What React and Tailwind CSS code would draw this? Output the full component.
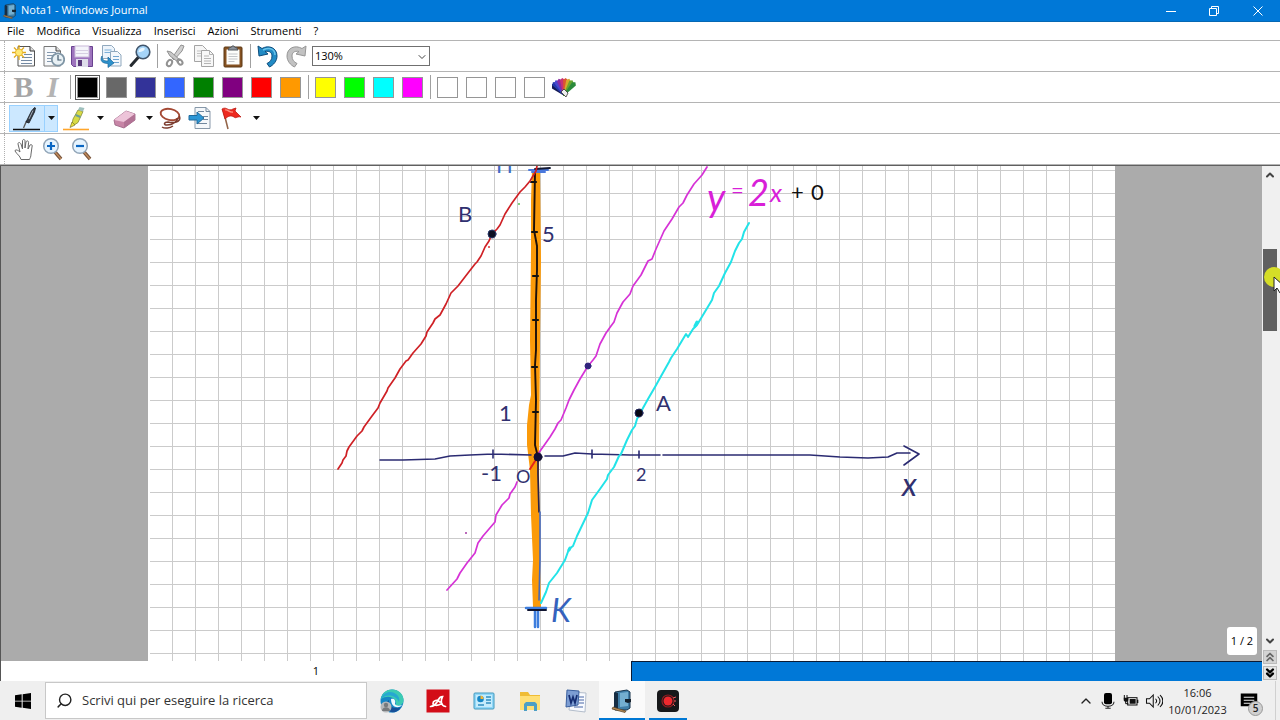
import { useState } from 'react';
import { ChevronDown, ChevronUp, ChevronsDown, ChevronsUp, Search } from 'lucide-react';

const MENUS = ['File', 'Modifica', 'Visualizza', 'Inserisci', 'Azioni', 'Strumenti', '?'];

const PEN_COLORS = [
  { name: 'Nero', className: 'bg-black' },
  { name: 'Grigio', className: 'bg-[#686868]' },
  { name: 'Blu scuro', className: 'bg-[#333399]' },
  { name: 'Blu', className: 'bg-[#3366ff]' },
  { name: 'Verde', className: 'bg-[#008000]' },
  { name: 'Viola', className: 'bg-[#800080]' },
  { name: 'Rosso', className: 'bg-[#ff0000]' },
  { name: 'Arancione', className: 'bg-[#ff9900]' },
];

const MARKER_COLORS = [
  { name: 'Giallo', className: 'bg-[#ffff00]' },
  { name: 'Verde chiaro', className: 'bg-[#00ff00]' },
  { name: 'Turchese', className: 'bg-[#00ffff]' },
  { name: 'Magenta', className: 'bg-[#ff00ff]' },
];

const CUSTOM_COLORS = ['Colore 1', 'Colore 2', 'Colore 3', 'Colore 4'];

/* ---------- Toolbar icons ---------- */

const Icon = ({ children, className = 'w-6 h-6' }) => (
  <svg viewBox="0 0 24 24" className={className} fill="none" aria-hidden="true">
    {children}
  </svg>
);

const NewNoteIcon = () => (
  <Icon>
    <path d="M6 2.500h12l4.500 4.500v15h-16.500z" fill="#fbfcfd" stroke="#555" />
    <path d="M18 2.500v4.500h4.500" fill="#ddd" stroke="#333" />
    <path d="M12 10.500h8M10 13.500h10M9 16.500h11M9 19.500h11" stroke="#7389a3" />
    <path d="M7 1v15M0 8.500h14M2 3.500l10 10M12 3.500l-10 10" stroke="#e2aa1b" strokeWidth="1.300" />
    <circle cx="7" cy="8.500" r="3.600" fill="#ffe873" stroke="#e9b82c" />
  </Icon>
);

const TemplateIcon = () => (
  <Icon>
    <path d="M3 2.500h12l4.500 4.500v15h-16.500z" fill="#f7f9fb" stroke="#777" />
    <path d="M15 2.500v4.500h4.500" fill="#ddd" stroke="#444" />
    <path d="M6 8.500h9M6 11.500h6M6 14.500h5M6 17.500h6" stroke="#8498ad" />
    <circle cx="17" cy="15.500" r="6.200" fill="#e9f1f5" stroke="#7f95a5" strokeWidth="1.800" />
    <path d="M17 11v5h3.500" stroke="#41596d" strokeWidth="1.200" />
  </Icon>
);

const SaveIcon = () => (
  <Icon>
    <path d="M1.500 2.500h21v20h-19l-2-2z" fill="#9d73bd" stroke="#694290" />
    <rect x="5" y="2" width="14" height="11" fill="#f4f4fa" stroke="#c8b7d8" />
    <path d="M6 6.500h12M6 9.500h12" stroke="#d6cfe2" />
    <rect x="6" y="15" width="12" height="8" fill="#deddea" />
    <rect x="8" y="16" width="4" height="6" fill="#583879" />
  </Icon>
);

const ImportIcon = () => (
  <Icon>
    <path d="M3.500 1.500h9l3 3v10h-12z" fill="#edf4fb" stroke="#91a9be" />
    <path d="M5.500 6h7M5.500 8.500h7" stroke="#7db0d9" />
    <path d="M11.500 7.500h7l3.500 3.500v11h-10.500z" fill="#f4f8fc" stroke="#91a9be" />
    <path d="M14 12.500h6M14 15.500h6M14 18.500h6" stroke="#71a5d0" />
    <path d="M3 12c0 4 2 5 6 5v-4l6 6-6 4.500v-4c-6 0-8.500-3-6-7.500z" fill="#2d91cb" stroke="#1a689d" strokeWidth=".7" />
  </Icon>
);

const FindIcon = () => (
  <Icon>
    <path d="M3 21.500l8-9" stroke="#252a30" strokeWidth="3" strokeLinecap="round" />
    <circle cx="15" cy="8" r="6.800" fill="#a5d4f8" stroke="#42566c" strokeWidth="1.600" />
    <path d="M10.500 8a4.500 4.500 0 0 1 6-4c1 2-2 4-6 4z" fill="#eaf7ff" />
  </Icon>
);

const CutIcon = () => (
  <Icon>
    <path d="M18 1l3 1-2 5-8 9-2-2z" fill="#d0d0d0" stroke="#929292" />
    <path d="M4 7l4 1 9 8-2 2-8-6z" fill="#c8c8c8" stroke="#929292" />
    <ellipse cx="6.500" cy="19" rx="2.300" ry="3.300" stroke="#929292" strokeWidth="2" transform="rotate(30 6.500 19)" />
    <ellipse cx="17" cy="18" rx="2" ry="3" stroke="#929292" strokeWidth="2" transform="rotate(-40 17 18)" />
  </Icon>
);

const CopyIcon = () => (
  <Icon>
    <path d="M2.500 1.500h8l4 4v12h-12z" fill="#f6f6f6" stroke="#a4a4a4" />
    <path d="M5 7h7M5 9.500h7M5 12h7" stroke="#c1c1c1" />
    <path d="M9.500 6.500h8l4 4v12h-12z" fill="#f8f8f8" stroke="#a4a4a4" />
    <path d="M17.500 6.500v4h4M12 12h5M12 14.500h7M12 17h7M12 19.500h7" stroke="#b4b4b4" />
  </Icon>
);

const PasteIcon = () => (
  <Icon>
    <rect x="3" y="3" width="18" height="20" rx="1" fill="#865222" stroke="#5d3815" />
    <path d="M5.500 5.500h13v15h-13z" fill="#fdfdfb" />
    <path d="M7.500 10h9M7.500 12.500h9M7.500 15h9M7.500 17.500h6" stroke="#c3c5c9" />
    <path d="M8 5V3.500h2L11 2h2l1 1.500h2V5l1 1H7z" fill="#8b929b" stroke="#555a60" />
  </Icon>
);

const UndoIcon = () => (
  <Icon>
    <path
      d="M2 2l1 10 9-2-3-2.500c5-1 7 1.500 7 4.500 0 4-2 6-5 7.500l2.500 3.500c4-2 7.500-6 7.500-11C21 4 13 .5 6 4.500z"
      fill="#218bc5"
      stroke="#0c4c7c"
    />
    <path d="M7 6c7-3 12-1 12 5" stroke="#68c3ea" strokeWidth="1.500" />
  </Icon>
);

const RedoIcon = () => (
  <Icon>
    <path
      d="M21 2l-1 10-9-2 3-2.500c-5-1-7 1.500-7 4.500 0 4 2 6 5 7.500L9.500 23C5.500 21 2 17 2 12 2 4 10 .5 17 4.500z"
      fill="#c2c2c2"
      stroke="#969696"
    />
  </Icon>
);

const FAN = [
  { angle: -52, color: '#151b55' },
  { angle: -41, color: '#233bad' },
  { angle: -30, color: '#4a48ce' },
  { angle: -18, color: '#8b2ca3' },
  { angle: -6, color: '#c73275' },
  { angle: 6, color: '#dc5631' },
  { angle: 18, color: '#d5a92e' },
  { angle: 30, color: '#6aa62f' },
  { angle: 42, color: '#2b8b3c' },
];

const PaletteIcon = () => (
  <Icon>
    {FAN.map(({ angle, color }) => (
      <path key={color} d="M11.500 21L9.500 5l2.500-2 2.500 2-2 16z" fill={color} transform={`rotate(${angle} 12 20)`} />
    ))}
    <path d="M9 17l3-3 4 4-2 4z" fill="#eee" stroke="#333" strokeWidth=".8" />
  </Icon>
);

const PenIcon = () => (
  <svg viewBox="0 0 30 26" className="w-[30px] h-[26px]" fill="none" aria-hidden="true">
    <path d="M1 24.500h27" stroke="#111" strokeWidth="1.500" />
    <path d="M11.500 23l3-7" stroke="#555" strokeWidth="1.300" />
    <path d="M14 17l5.500-11 3-3.500 1 .5-1 4L17 18z" fill="#343b45" stroke="#15191e" strokeWidth=".8" />
    <path d="M17 14l4-8.500" stroke="#a3adb8" />
  </svg>
);

const HighlighterIcon = () => (
  <svg viewBox="0 0 30 26" className="w-[30px] h-[26px]" fill="none" aria-hidden="true">
    <path d="M2 24.500h26" stroke="#ffa62c" strokeWidth="1.600" />
    <path d="M11 19l1-5 5-9 5 1.500-5 11-3 2z" fill="#d8db45" stroke="#878a37" strokeWidth=".8" />
    <path d="M17 5l1.500-3 5 1-1.500 3.500z" fill="#9fc0bd" />
    <path d="M14.500 10l5 2" stroke="#6d9f96" strokeWidth="2" />
    <path d="M11 17l-2 5.500 5-2.500z" fill="#e8e138" stroke="#777632" strokeWidth=".7" />
  </svg>
);

const EraserIcon = () => (
  <Icon>
    <path d="M1 14L13 5l9 3v6L11 22 2 19z" fill="#c785a6" stroke="#986080" strokeWidth=".8" />
    <path d="M1 14L13 5l9 3-11 8z" fill="#edc4d9" />
    <path d="M11 16v6l11-8V8z" fill="#b27395" />
  </Icon>
);

const LassoIcon = () => (
  <Icon>
    <ellipse cx="11" cy="8.500" rx="9.500" ry="5.500" stroke="#a44934" strokeWidth="1.900" transform="rotate(12 11 8.500)" />
    <path d="M20 10c3 4-2 8-11 6-4 0-5 3-1 3 6 0 11-4 10-7M3 21c3 2 8 1 11-1" stroke="#7d3d30" strokeWidth="1.500" />
  </Icon>
);

const InsertIcon = () => (
  <Icon>
    <path d="M7 1.500h11l4 4v17h-15z" fill="#f5f8fb" stroke="#8798a9" />
    <path d="M18 1.500v4h4M10 5.500h6M15 10.500h5M15 13.500h5M9 17.500h10" stroke="#72889e" />
    <path d="M1 9.500h8V6l7 6-7 6v-4H1z" fill="#2c96d5" stroke="#216b9c" />
  </Icon>
);

const FlagIcon = () => (
  <Icon>
    <path d="M3 3l5 20" stroke="#936448" strokeWidth="1.500" />
    <path d="M2 3c5-3 6 3 11 0l3-1-1 3 6 6c-4-1-5 2-7 0-3-2-6-1-9 2z" fill="#ed2a20" stroke="#bd1912" strokeWidth=".8" />
    <path d="M5 4c3-1 4 3 8 2" stroke="#ff8e7e" strokeWidth="1.300" />
  </Icon>
);

const HandIcon = () => (
  <Icon>
    <path
      d="M9 22.500c-1-4-4-5-6-8.500 0-2 3-1 5 1L6 7c0-2 2-2 3 0l1.500 5V4c0-2 2.500-2 2.500 0v7l1-6c1-2 3-1 2.500 1L16 12l2-4c1-1 3 0 2 2l-1 7c0 3-1 4-1.500 5.500z"
      fill="#fff"
      stroke="#696969"
    />
  </Icon>
);

const ZoomIcon = ({ plus }) => (
  <Icon>
    <path d="M14 15l6 7" stroke="#74513a" strokeWidth="3.500" />
    <path d="M14 15l6 7" stroke="#c08a5b" strokeWidth="1.500" />
    <circle cx="10" cy="9" r="7.300" fill="#e6f4ff" stroke="#91a5b8" strokeWidth="1.500" />
    <path d={plus ? 'M6 9h8M10 5v8' : 'M6 9h8'} stroke="#0966c3" strokeWidth="2.200" />
  </Icon>
);

/* ---------- Taskbar icons ---------- */

const JournalIcon = ({ className = 'w-6 h-6' }) => (
  <Icon className={className}>
    <path d="M5 3l12-2 3 2v16l-3 2H5z" fill="#407fa8" stroke="#18354c" />
    <path d="M5 3l3 1v17H4V4z" fill="#162d43" />
    <path d="M10 4l8-1v14l-8 1z" fill="#74afd0" />
    <path d="M15 10h6v3l-3 1-3-1z" fill="#14212d" />
    <path d="M3 18l13 4-1 1.500L2 20z" fill="#b98b52" stroke="#554028" strokeWidth=".7" />
  </Icon>
);

const WindowsIcon = () => (
  <Icon className="w-4 h-4">
    <path d="M0 3.500L10 2v9.500H0zM11.500 1.800L24 0v11.500H11.500zM0 12.800h10V22L0 20.700zM11.500 12.800H24V24l-12.500-1.800z" fill="#000" />
  </Icon>
);

const EdgeIcon = () => (
  <Icon>
    <circle cx="12" cy="12" r="11.500" fill="#1686c5" />
    <path d="M1 10C2 3 8 0 13 .5c7 .5 11 6 10.500 11.500-.5 4-4 5.500-8 4.500 3-7-7-12-14.500-6.500z" fill="#3bcbb3" />
    <path d="M1 10C3 3 11 1 16 5c3 2 4 5 3 8-3-7-12-9-18-3z" fill="#26a8d1" />
    <path d="M9 11c-1 6 5 10 12 7-2 4-6 6-10 5-6-2-6-9-2-12z" fill="#174f98" />
    <path d="M11 10c3-1 5 1 4 5 1 2 4 2 7 1-3 4-11 3-11-6z" fill="#effaff" />
    <circle cx="6" cy="18" r="5.500" fill="#b5b7b9" />
    <circle cx="6" cy="16" r="2.200" fill="#76797c" />
    <path d="M2 22c0-5 8-5 8 0z" fill="#76797c" />
  </Icon>
);

const AviraIcon = () => (
  <Icon>
    <path d="M.5.5h23v23H.5z" fill="#d30d18" />
    <path
      d="M4.500 17.500c4 0 6-3 8-7 1-2 2-3 4-3-2 4-2 9 3 10M14 13c-4-3-7-1-7 1.500 0 2 4 2.500 8 .5"
      stroke="#fff"
      strokeWidth="1.700"
      strokeLinecap="round"
    />
  </Icon>
);

const ControlPanelIcon = () => (
  <Icon>
    <rect x="2" y="4" width="20" height="16" rx="1" fill="#90d7f8" stroke="#4399bd" />
    <path d="M4 6h16v12H4z" fill="#c5ecfc" />
    <circle cx="8.500" cy="10" r="3.300" fill="#1586c6" />
    <path d="M8.500 10V6.500a3.500 3.500 0 0 1 3 3.500z" fill="#f5b536" />
    <path d="M14 8h5M14 11h5M14 14h5M6 16h6" stroke="#328dbe" strokeWidth="1.300" />
  </Icon>
);

const FolderIcon = () => (
  <Icon>
    <path d="M2 3h8l2 3h10v15H2z" fill="#efbc35" />
    <path d="M2 7h20v14H2z" fill="#ffdf75" />
    <path d="M6 22v-7l2-2h9l2 2v7h-3v-5H9v5z" fill="#4d9fc5" />
  </Icon>
);

const WordIcon = () => (
  <Icon>
    <path d="M7 3l15 1-1 19-16-2z" fill="#f9fbff" stroke="#b3bdcb" />
    <path d="M15 8h5M15 11h5M15 14h5M10 18h9" stroke="#4867a5" strokeWidth="1.200" />
    <path d="M3 1l12 1-1 14-12 2z" fill="#7c9dd3" stroke="#395f9e" />
    <path d="M5 6l2 8 2-6 2 6 2-8" stroke="#152d72" strokeWidth="1.700" />
  </Icon>
);

const RecorderIcon = () => (
  <Icon>
    <rect x="1" y="1" width="22" height="22" rx="4" fill="#17181a" />
    <circle cx="12" cy="12" r="6" stroke="#8e1c20" strokeWidth="1.200" />
    <circle cx="12" cy="12" r="4.500" fill="#ef292e" />
    <path d="M17 9l3-1M18 12h2M17 15l2 2" stroke="#ed5b5e" />
  </Icon>
);

const MicIcon = () => (
  <Icon className="w-4 h-4">
    <rect x="6" y="0" width="12" height="17" rx="3" fill="#000" />
    <path d="M3 13c0 9 18 9 18 0M12 20v3M8 23h8" stroke="#222" strokeWidth="1.600" />
  </Icon>
);

const BatteryIcon = () => (
  <Icon className="w-4 h-4">
    <rect x="7" y="7" width="14" height="11" stroke="#111" strokeWidth="1.500" />
    <path d="M10 9h9v7h-9zM21 10h2v5h-2zM1 7h7v3c0 4-7 4-7 0z" fill="#111" />
    <path d="M2 3v5M6 3v5M4 12v4h4" stroke="#111" strokeWidth="1.500" />
  </Icon>
);

const VolumeIcon = () => (
  <Icon className="w-[18px] h-[18px]">
    <path d="M2 9h4l5-5v16l-5-5H2zM14 9c2 2 2 4 0 6M17 6c4 4 4 8 0 12M20 4c5 5 5 11 0 16" stroke="#111" strokeWidth="1.400" />
  </Icon>
);

const NotificationIcon = () => (
  <Icon className="w-[18px] h-[18px]">
    <path d="M1 2h22v17h-5v4l-5-4H1z" fill="#000" />
    <path d="M5 7h14M5 11h14M5 15h9" stroke="#efefef" strokeWidth="1.500" />
  </Icon>
);

/* ---------- Toolbar parts ---------- */

const ToolButton = ({ label, children, onClick, pressed }) => (
  <button
    type="button"
    aria-label={label}
    aria-pressed={pressed}
    onClick={onClick}
    className="w-[29px] h-7 shrink-0 flex items-center justify-center hover:bg-sky-50"
  >
    {children}
  </button>
);

const SplitButton = ({ label, children, active }) => (
  <div className={`flex shrink-0 w-[49px] h-[27px] ${active ? 'bg-[#cce8ff] outline outline-[#99d1ff] -outline-offset-1' : ''}`}>
    <button type="button" aria-label={label} className="w-[35px] flex items-center justify-center">
      {children}
    </button>
    <button
      type="button"
      aria-label={`Opzioni ${label}`}
      className={`w-[14px] flex items-center justify-center ${active ? 'border-l border-[#99d1ff]' : ''}`}
    >
      <svg viewBox="0 0 7 4" className="w-[7px] h-1" aria-hidden="true">
        <path d="M0 0h7L3.500 4z" fill="#111" />
      </svg>
    </button>
  </div>
);

const Separator = () => (
  <div className="w-[6px] shrink-0 flex justify-center">
    <div className="w-px h-6 bg-[#a0a0a0]" />
  </div>
);

const ToolbarRow = ({ label, children }) => (
  <div role="toolbar" aria-label={label} className="h-[31px] pl-1 flex items-center bg-white border-b border-[#b4b4b4]">
    <div className="w-[5px] h-full shrink-0 border-l border-dotted border-[#b0b0b0]" />
    {children}
  </div>
);

const Swatch = ({ name, className, selected, onSelect }) => (
  <ToolButton label={name} pressed={selected} onClick={() => onSelect(name)}>
    <span
      className={`w-[21px] h-[21px] border border-[#969696] ${className} ${
        selected ? 'outline outline-[#555] outline-offset-1' : ''
      }`}
    />
  </ToolButton>
);

/* ---------- Page with the ink ---------- */

const Tick = ({ x, y }) => <path d={`M${x} ${y}h5`} stroke="#111" strokeWidth="2.200" />;

const InkPage = () => (
  <svg className="w-[967px] h-full shrink-0 bg-white font-['Lato',sans-serif]" fill="none" role="img" aria-label="Grafico">
    <defs>
      <pattern id="squares" x="24" y="4" width="23" height="23" patternUnits="userSpaceOnUse">
        <path d="M.5 0v23M0 .5h23" stroke="#cbcbcb" />
      </pattern>
    </defs>
    <rect x="2" width="965" height="100%" fill="url(#squares)" />

    <g transform="translate(-148 -166)" strokeLinecap="round" strokeLinejoin="round">
      {/* y axis */}
      <path
        d="M532 170L531 200 531 250 530 340 531 395 529 405 527 425 527 445 530 470 531 515 533 560 532 580 533 607H541L540 560 540 530 539 470 540 340 541 260 540 170z"
        fill="#fb9a09"
      />
      <path d="M535 172L534 230 537 246 537 270 536 300 536 350 535 365 536 400 535 445 538 457" stroke="#1c100b" strokeWidth="1.900" />
      <path d="M538 457L538 475 539 512" stroke="#29224b" strokeWidth="1.700" />
      <path d="M540 512L540 560 539 600" stroke="#4668ba" strokeWidth="1.600" />
      <Tick x={531} y={182} />
      <Tick x={532} y={232} />
      <Tick x={533} y={276} />
      <Tick x={533} y={320} />
      <Tick x={532} y={367} />
      <Tick x={533} y={412} />
      <path d="M529 170H548M532 172H545" stroke="#4a78dc" strokeWidth="2" />
      <path d="M535 169L550 168" stroke="#151a33" strokeWidth="1.800" />

      {/* x axis */}
      <path
        d="M380 460H403L435 459 450 456 470 455 493 454 531 455M545 456H563L575 453 592 454 630 455H660M663 455H810L840 457 868 458 888 457 897 453 910 453M904 446L919 454 904 465M493 450V458M592 450V458M639 451V458"
        stroke="#2b2b72"
        strokeWidth="1.600"
      />

      {/* lines */}
      <path
        d="M537 166L536 171 530 181 525 187 520 192 512 203 505 214 500 225 497 229 492 234 489 241 485 247 481 256 477 262 475 264 468 273 458 286 451 293 446 304 440 315 435 319 433 323 427 332 426 336 421 344 413 353 408 360 406 361 400 369 395 378 388 388 387 391 380 403 378 408 372 416 364 427 362 431 357 436 349 447 347 451 346 456 343 460 342 463 338 469"
        stroke="#cf2025"
        strokeWidth="1.700"
      />
      <path
        d="M707 167L702 175 694 184 687 195 683 203 679 207 672 219 664 231 656 249 652 259 648 261 641 275 633 286 630 294 623 302 617 313 614 322 611 326 606 333 600 344 596 356 593 360 588 366 580 379 574 390 569 400 566 408 561 420 558 423 555 429 550 437 538 454"
        stroke="#d632d6"
        strokeWidth="1.700"
      />
      <path
        d="M517 482L515 487 510 494 509 498 502 505 496 515 495 522 489 529 483 536 478 543 475 553 467 563 460 573 457 579 447 590"
        stroke="#d632d6"
        strokeWidth="1.700"
      />
      <path d="M537 458L530 469" stroke="#e4261a" strokeWidth="2" />
      <path
        d="M749 223L744 232 742 239 739 243 735 251 731 262 725 273 719 286 714 293 712 300 703 315 697 325 693 329 688 337 686 334 683 339 677 349 671 358 669 362 660 378 655 387 648 399 643 408 637 419 635 426 632 430 627 440 621 454 619 456 614 467 608 475 607 479 600 489 592 500 588 513 577 536 573 546 569 549 565 560 557 573 549 583 546 592 541 603"
        stroke="#22e3e8"
        strokeWidth="2"
      />
      <path d="M697 322L695 326M570 548L569 550" stroke="#22e3e8" strokeWidth="3" />

      {/* points */}
      <circle cx="492" cy="234" r="4" fill="#0c1023" stroke="#263568" />
      <circle cx="588" cy="366" r="3" fill="#30247d" stroke="#30247d" />
      <circle cx="538" cy="457" r="4" fill="#131036" stroke="#131036" />
      <circle cx="639" cy="413" r="4" fill="#070714" stroke="#20265b" />
      <circle cx="489" cy="247" r="1" fill="#d33" />
      <circle cx="519" cy="204" r="1" fill="#53c653" />
      <circle cx="466" cy="533" r="1" fill="#a538a5" />
      <path d="M526 608H546M535 608V627M538 608V627" stroke="#3d7ddd" strokeWidth="2.500" />
      <path d="M528 610H546" stroke="#101530" strokeWidth="2" />

      {/* labels */}
      <g fill="#30306f" fontSize="22">
        <text x="458" y="222">B</text>
        <text x="542" y="242">5</text>
        <text x="499" y="421">1</text>
        <text x="481" y="481">-1</text>
        <text x="516" y="483" fontSize="18">O</text>
        <text x="636" y="481" fontSize="18">2</text>
        <text x="656" y="411">A</text>
        <text x="902" y="496" fontSize="32" fontStyle="italic">x</text>
      </g>
      <text x="496" y="173" fill="#416bc5" fontSize="22">H</text>
      <text x="551" y="622" fill="#3562bd" fontSize="32" fontStyle="italic">K</text>
      <g fill="#d820d8">
        <text x="707" y="211" fontSize="38" fontStyle="italic">y</text>
        <text x="731" y="198" fontSize="22">=</text>
        <text x="748" y="206" fontSize="36" fontStyle="italic">2</text>
        <text x="770" y="202" fontSize="26" fontStyle="italic">x</text>
      </g>
      <g fill="#111" fontSize="22">
        <text x="791" y="200">+</text>
        <text x="811" y="200">0</text>
      </g>
    </g>
  </svg>
);

const ScrollBar = () => (
  <div className="w-[18px] shrink-0 flex flex-col items-start bg-[#f0f0f0] pl-px">
    <button type="button" aria-label="Scorri su" className="w-[14px] h-[18px] flex items-center justify-center">
      <ChevronUp className="w-3 h-3 text-[#444]" strokeWidth={4} />
    </button>
    <div className="flex-1 flex flex-col w-[17px]">
      <div className="grow-[65]" />
      <div className="grow-[82] w-[14px] bg-[#606060] relative">
        {/* Highlighted pointer */}
        <div className="absolute left-0 top-[18px] w-[17px] h-[29px] overflow-hidden">
          <svg viewBox="0 0 17 29" className="w-[17px] h-[29px]" aria-hidden="true">
            <circle cx="11" cy="10" r="10" fill="#d5dd27" />
            <path d="M11 10v14l3-3 3 5 3-2-2-4h4z" fill="#fff" stroke="#222" />
          </svg>
        </div>
      </div>
      <div className="grow-[301]" />
    </div>
    <button type="button" aria-label="Scorri giù" className="w-[14px] h-[18px] flex items-center justify-center">
      <ChevronDown className="w-3 h-3 text-[#444]" strokeWidth={4} />
    </button>
    <button type="button" aria-label="Pagina precedente" className="w-[14px] h-[14px] mb-[2px] flex items-center justify-center bg-[#d4d4d4] border border-[#bbb]">
      <ChevronsUp className="w-[14px] h-[14px] shrink-0 text-[#666]" strokeWidth={3} />
    </button>
    <button type="button" aria-label="Pagina successiva" className="w-[14px] h-[14px] mb-px flex items-center justify-center bg-[#e4e4e4] border border-[#bbb]">
      <ChevronsDown className="w-[14px] h-[14px] shrink-0 text-black" strokeWidth={4} />
    </button>
  </div>
);

const TaskButton = ({ label, children, active, running }) => (
  <button
    type="button"
    aria-label={label}
    className={`h-full shrink-0 flex items-center justify-center ${running ? 'w-[38px] mx-1' : 'w-[46px]'} ${
      active ? 'bg-[#fafafa]' : ''
    } ${active || running ? 'border-y-2 border-t-transparent border-b-[#0078d4]' : ''}`}
  >
    {children}
  </button>
);

const Taskbar = () => (
  <footer className="h-[39px] shrink-0 flex items-center bg-[#efefef] text-[#222]">
    <button type="button" aria-label="Start" className="w-[45px] h-full flex items-center justify-center">
      <WindowsIcon />
    </button>
    <label className="w-[322px] h-[37px] flex items-center gap-[9px] px-[10px] bg-white border border-[#c8c8c8]">
      <Search className="w-[17px] h-[17px] shrink-0 -scale-x-100" strokeWidth={2} />
      <input
        type="text"
        aria-label="Cerca"
        placeholder="Scrivi qui per eseguire la ricerca"
        className="flex-1 min-w-0 bg-transparent outline-none text-[13px] placeholder:text-[#333]"
      />
    </label>
    <div className="h-full flex pl-[2px]">
      <TaskButton label="Edge"><EdgeIcon /></TaskButton>
      <TaskButton label="Avira"><AviraIcon /></TaskButton>
      <TaskButton label="Pannello di controllo"><ControlPanelIcon /></TaskButton>
      <TaskButton label="Esplora file"><FolderIcon /></TaskButton>
      <TaskButton label="Word"><WordIcon /></TaskButton>
      <TaskButton label="Windows Journal" active><JournalIcon /></TaskButton>
      <TaskButton label="Registratore" running><RecorderIcon /></TaskButton>
    </div>
    <div className="ml-auto h-full flex items-center">
      <button type="button" aria-label="Icone nascoste" className="w-[22px] flex justify-center">
        <ChevronUp className="w-4 h-4" strokeWidth={2} />
      </button>
      <div className="w-[22px] flex justify-center"><MicIcon /></div>
      <div className="w-[23px] flex justify-center"><BatteryIcon /></div>
      <div className="w-[23px] flex justify-center"><VolumeIcon /></div>
      <div className="w-[65px] text-center text-[11px] leading-[17px]">
        <div>16:06</div>
        <div>10/01/2023</div>
      </div>
      <button type="button" aria-label="Notifiche" className="relative w-[46px] h-full pl-[10px] flex items-center border-r border-[#d0d0d0]">
        <NotificationIcon />
        <span className="absolute left-[18px] top-[20px] w-[15px] h-[15px] rounded-full bg-[#d0d0d0] border border-[#999] text-[10px] leading-[13px] text-center font-semibold">
          5
        </span>
      </button>
      <div className="w-1" />
    </div>
  </footer>
);

export default function App() {
  const [color, setColor] = useState('Nero');
  const [zoom, setZoom] = useState('130%');

  return (
    <div className="h-screen min-h-[480px] flex flex-col overflow-hidden bg-white font-['Open_Sans',sans-serif] text-black">
      {/* Title bar */}
      <header className="h-[22px] shrink-0 pl-[2px] flex items-center bg-[#0078d7] border-b border-[#0668b3] text-white">
        <JournalIcon className="w-4 h-4" />
        <h1 className="ml-[3px] text-[11px]">Nota1 - Windows Journal</h1>
        <div className="ml-auto h-full flex">
          <button type="button" aria-label="Riduci a icona" className="w-[43px] flex items-center justify-center">
            <svg viewBox="0 0 10 10" className="w-[10px] h-[10px]" fill="none" stroke="#fff"><path d="M0 5.500h10" /></svg>
          </button>
          <button type="button" aria-label="Ripristina" className="w-[43px] flex items-center justify-center">
            <svg viewBox="0 0 10 10" className="w-[10px] h-[10px]" fill="none" stroke="#fff"><path d="M.5 2.500h7v7h-7zM2.500 2.500v-2h7v7h-2" /></svg>
          </button>
          <button type="button" aria-label="Chiudi" className="w-[45px] flex items-center justify-center">
            <svg viewBox="0 0 10 10" className="w-[10px] h-[10px]" fill="none" stroke="#fff"><path d="M.5.5l9 9M9.500.5l-9 9" /></svg>
          </button>
        </div>
      </header>

      {/* Menu bar */}
      <nav className="h-[19px] shrink-0 flex items-center gap-3 pl-[7px] border-b border-[#b4b4b4] text-[11px]">
        {MENUS.map((item) => (
          <button key={item} type="button">{item}</button>
        ))}
      </nav>

      {/* Toolbars */}
      <div className="shrink-0 border-b border-[#606060]">
        <ToolbarRow label="Standard">
          <ToolButton label="Nuova nota"><NewNoteIcon /></ToolButton>
          <ToolButton label="Nuova nota da modello"><TemplateIcon /></ToolButton>
          <ToolButton label="Salva"><SaveIcon /></ToolButton>
          <ToolButton label="Importa"><ImportIcon /></ToolButton>
          <ToolButton label="Trova"><FindIcon /></ToolButton>
          <Separator />
          <ToolButton label="Taglia"><CutIcon /></ToolButton>
          <ToolButton label="Copia"><CopyIcon /></ToolButton>
          <ToolButton label="Incolla"><PasteIcon /></ToolButton>
          <Separator />
          <ToolButton label="Annulla"><UndoIcon /></ToolButton>
          <ToolButton label="Ripeti"><RedoIcon /></ToolButton>
          <div className="relative w-[118px] h-5 ml-px">
            <select
              aria-label="Zoom"
              value={zoom}
              onChange={(e) => setZoom(e.target.value)}
              className="block w-full h-full pl-[2px] appearance-none border border-[#707070] bg-white text-[11px] leading-4"
            >
              <option>100%</option>
              <option>130%</option>
              <option>200%</option>
            </select>
            <ChevronDown className="absolute right-[2px] top-[5px] w-3 h-3 text-[#444] pointer-events-none" strokeWidth={2} />
          </div>
        </ToolbarRow>

        <ToolbarRow label="Formato">
          <ToolButton label="Grassetto">
            <span className="font-['Liberation_Serif',serif] font-bold text-[30px] leading-7 text-[#a6a6a6]">B</span>
          </ToolButton>
          <ToolButton label="Corsivo">
            <span className="font-['Liberation_Serif',serif] font-bold italic text-[30px] leading-7 text-[#b4b4b4]">I</span>
          </ToolButton>
          <Separator />
          {PEN_COLORS.map((c) => (
            <Swatch key={c.name} {...c} selected={color === c.name} onSelect={setColor} />
          ))}
          <Separator />
          {MARKER_COLORS.map((c) => (
            <Swatch key={c.name} {...c} selected={color === c.name} onSelect={setColor} />
          ))}
          <Separator />
          {CUSTOM_COLORS.map((name) => (
            <Swatch key={name} name={name} className="bg-white" selected={color === name} onSelect={setColor} />
          ))}
          <ToolButton label="Altri colori"><PaletteIcon /></ToolButton>
        </ToolbarRow>

        <ToolbarRow label="Penna">
          <SplitButton label="Penna" active><PenIcon /></SplitButton>
          <SplitButton label="Evidenziatore"><HighlighterIcon /></SplitButton>
          <SplitButton label="Gomma"><EraserIcon /></SplitButton>
          <ToolButton label="Selezione"><LassoIcon /></ToolButton>
          <ToolButton label="Inserisci spazio"><InsertIcon /></ToolButton>
          <SplitButton label="Contrassegno"><FlagIcon /></SplitButton>
        </ToolbarRow>

        <ToolbarRow label="Visualizza">
          <ToolButton label="Panoramica"><HandIcon /></ToolButton>
          <ToolButton label="Zoom avanti"><ZoomIcon plus /></ToolButton>
          <ToolButton label="Zoom indietro"><ZoomIcon /></ToolButton>
        </ToolbarRow>
      </div>

      {/* Note */}
      <main className="flex-1 min-h-0 flex">
        <div className="flex-1 min-w-0 flex flex-col border-l border-[#555]">
          <div className="relative flex-1 min-h-0 flex justify-center overflow-hidden bg-[#ababab]">
            <InkPage />
            <div className="absolute right-[5px] bottom-[6px] w-[30px] h-7 flex items-center justify-center rounded-[3px] bg-white text-[11px]">
              1 / 2
            </div>
          </div>
          <div className="h-5 shrink-0 flex text-[11px]">
            <div className="flex-1 flex items-center justify-center">1</div>
            <div className="flex-1 bg-[#0078d7] border-t border-l border-[#0b1a33]" />
          </div>
        </div>
        <ScrollBar />
      </main>

      <Taskbar />
    </div>
  );
}
